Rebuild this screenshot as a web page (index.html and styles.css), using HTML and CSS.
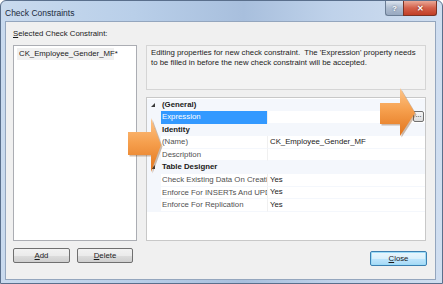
FILE: index.html
```html
<!DOCTYPE html>
<html lang="en">
<head>
    <meta charset="UTF-8">
    <title>Check Constraints</title>
    <link rel="stylesheet" href="styles.css">
</head>
<body>
    <div class="window">
        <div class="titlebar">
            <span class="title">Check Constraints</span>
            <div class="caption-buttons">
                <span class="cap-btn help">?</span>
                <span class="cap-btn close">✕</span>
            </div>
        </div>

        <div class="client">
            <!-- 左側: 制約の一覧 -->
            <div class="left-pane">
                <div class="label"><u>S</u>elected Check Constraint:</div>
                <div class="listbox">
                    <div class="list-item">CK_Employee_Gender_MF*</div>
                </div>
                <div class="button-row">
                    <button class="btn add"><u>A</u>dd</button>
                    <button class="btn delete"><u>D</u>elete</button>
                </div>
            </div>

            <!-- 右側: 説明とプロパティグリッド -->
            <div class="right-pane">
                <div class="description">
                    Editing properties for new check constraint.&nbsp; The 'Expression' property needs to be filled in before the new check constraint will be accepted.
                </div>

                <div class="prop-grid">
                    <div class="row category">
                        <span class="gutter"><i class="expander"></i></span>
                        <span class="cat-name">(General)</span>
                    </div>
                    <div class="row">
                        <span class="gutter"></span>
                        <span class="name selected">Expression</span>
                        <span class="value"><span class="ellipsis">...</span></span>
                    </div>
                    <div class="row category">
                        <span class="gutter"><i class="expander"></i></span>
                        <span class="cat-name">Identity</span>
                    </div>
                    <div class="row">
                        <span class="gutter"></span>
                        <span class="name">(Name)</span>
                        <span class="value">CK_Employee_Gender_MF</span>
                    </div>
                    <div class="row">
                        <span class="gutter"></span>
                        <span class="name">Description</span>
                        <span class="value"></span>
                    </div>
                    <div class="row category">
                        <span class="gutter"><i class="expander"></i></span>
                        <span class="cat-name">Table Designer</span>
                    </div>
                    <div class="row">
                        <span class="gutter"></span>
                        <span class="name">Check Existing Data On Creation Or Re-Enabling</span>
                        <span class="value">Yes</span>
                    </div>
                    <div class="row">
                        <span class="gutter"></span>
                        <span class="name">Enforce For INSERTs And UPDATEs</span>
                        <span class="value">Yes</span>
                    </div>
                    <div class="row">
                        <span class="gutter"></span>
                        <span class="name">Enforce For Replication</span>
                        <span class="value">Yes</span>
                    </div>
                </div>

                <div class="button-row end">
                    <button class="btn default"><u>C</u>lose</button>
                </div>
            </div>
        </div>

        <!-- 注釈用のオレンジ矢印 (重ね描き) -->
        <svg class="arrows" width="443" height="284" viewBox="0 0 443 284">
            <defs>
                <linearGradient id="orange" x1="0" y1="0" x2="0" y2="1">
                    <stop offset="0" stop-color="#fdc58a"/>
                    <stop offset="0.45" stop-color="#f6a04e"/>
                    <stop offset="1" stop-color="#e2741c"/>
                </linearGradient>
            </defs>
            <polygon points="128,132 151,132 151,118 161,145 151,172 151,155 128,155" fill="#7a4310" opacity="0.35" transform="translate(1.5,1.5)"/>
            <polygon points="128,132 151,132 151,118 161,145 151,172 151,155 128,155" fill="url(#orange)"/>
            <polygon points="380,103 400,103 400,88 415,113 400,136 400,124 380,124" fill="#7a4310" opacity="0.35" transform="translate(1.5,1.5)"/>
            <polygon points="380,103 400,103 400,88 415,113 400,136 400,124 380,124" fill="url(#orange)"/>
        </svg>
    </div>
</body>
</html>
```

FILE: styles.css
```css
body {
    margin: 0;
    font-family: "Liberation Sans", Arial, sans-serif;
    font-size: 7.8px;
    color: #1a1a1a;
    background-color: #fff;
}

.window {
    position: relative;
    width: 443px;
    height: 284px;
    box-sizing: border-box;
    border: 1px solid #5a6f8c;
    border-radius: 6px 6px 0 0;
    padding: 0 6px 3px 4px;
    background: linear-gradient(to right, #c9daee 0%, #b9cfe9 30%, #a8bfdd 55%, #bfd2ea 75%, #d0def0 100%);
    overflow: hidden;
}

/* タイトルバー */
.titlebar {
    display: flex;
    justify-content: space-between;
    align-items: flex-start;
    height: 20px;
    margin-right: -1px;
}

.title {
    font-size: 8.5px;
    color: #1b2a3c;
    line-height: 11px;
    margin-top: 7px;
}

.caption-buttons {
    display: flex;
}

.cap-btn {
    height: 15px;
    box-sizing: border-box;
    border: 1px solid #6b7d95;
    border-top: none;
    display: flex;
    align-items: center;
    justify-content: center;
    color: #fff;
    font-size: 8px;
    font-weight: bold;
}

.cap-btn.help {
    width: 18px;
    border-radius: 0 0 0 3px;
    border-right: none;
    background: linear-gradient(#dbe4ef, #aebcd0 50%, #98a9c1);
    text-shadow: 0 0 2px #4a5a70;
}

.cap-btn.close {
    width: 34px;
    border-radius: 0 0 3px 0;
    border-color: #7a3325;
    background: linear-gradient(#eaa896, #d4604a 50%, #c13e26);
    text-shadow: 0 0 2px #6a1b10;
}

/* クライアント領域 */
.client {
    display: flex;
    gap: 9px;
    height: 259px;
    box-sizing: border-box;
    border: 1px solid #94a6be;
    background-color: #f0f0f0;
    padding: 6px 9px 0 7px;
}

.left-pane {
    width: 124px;
    display: flex;
    flex-direction: column;
}

.label {
    height: 11px;
    line-height: 11px;
    margin-bottom: 6px;
}

.listbox {
    height: 196px;
    box-sizing: border-box;
    border: 1px solid #abadb3;
    background-color: #fff;
    padding: 2px 0 0 3px;
}

.list-item {
    width: 97px;
    height: 12px;
    line-height: 12px;
    padding-left: 2px;
    box-sizing: border-box;
    background-color: #f0f0f0;
    white-space: nowrap;
}

.button-row {
    display: flex;
    gap: 7px;
    margin-top: 7px;
}

.button-row.end {
    justify-content: flex-end;
    margin-top: 10px;
    margin-right: -1px;
}

.btn {
    height: 15px;
    box-sizing: border-box;
    border: 1px solid #707070;
    border-radius: 2px;
    background: linear-gradient(#f2f2f2 0%, #ebebeb 50%, #dddddd 51%, #cfcfcf 100%);
    font-family: "Liberation Sans", Arial, sans-serif;
    font-size: 7.8px;
    color: #1a1a1a;
    padding: 0;
}

.btn.add {
    width: 57px;
}

.btn.delete {
    width: 56px;
}

.btn.default {
    width: 57px;
    border-color: #3c7fb1;
    background: linear-gradient(#eaf6fd 0%, #d9f0fc 50%, #bee6fd 51%, #a7d9f5 100%);
    box-shadow: inset 0 0 0 1px #9ddcf7;
}

.right-pane {
    width: 280px;
    display: flex;
    flex-direction: column;
    padding-top: 17px;
}

.description {
    height: 45px;
    box-sizing: border-box;
    border: 1px solid #d5d5d5;
    background-color: #f3f3f3;
    padding: 2px 3px 2px 4px;
    line-height: 10px;
    color: #222;
}

/* プロパティグリッド */
.prop-grid {
    height: 144px;
    box-sizing: border-box;
    margin-top: 7px;
    border: 1px solid #c8c8c8;
    background-color: #fff;
}

.row {
    display: flex;
    height: 12.6px;
    line-height: 12px;
}

.row:first-child {
    margin-top: 0.5px;
}

.gutter {
    width: 14px;
    flex-shrink: 0;
    background-color: #f4f7fc;
    position: relative;
}

.expander {
    position: absolute;
    left: 4px;
    top: 4px;
    width: 0;
    height: 0;
    border-left: 4px solid transparent;
    border-bottom: 4px solid #3a3a3a;
}

.category {
    background-color: #f4f7fc;
}

.cat-name {
    font-weight: bold;
    padding-left: 1px;
}

.name {
    width: 106px;
    flex-shrink: 0;
    box-sizing: border-box;
    padding-left: 1px;
    color: #505050;
    white-space: nowrap;
    overflow: hidden;
    border-bottom: 1px solid #f4f7fc;
}

.name.selected {
    background-color: #3399ff;
    color: #fff;
    border-bottom-color: #3399ff;
}

.value {
    flex: 1;
    display: flex;
    align-items: center;
    box-sizing: border-box;
    padding-left: 2px;
    border-left: 1px solid #f0f0f0;
    border-bottom: 1px solid #f4f7fc;
    white-space: nowrap;
}

.ellipsis {
    margin-left: auto;
    margin-right: 1px;
    width: 11px;
    height: 11px;
    box-sizing: border-box;
    border: 1px solid #707070;
    border-radius: 2px;
    background: linear-gradient(#f6f6f6, #dcdcdc);
    font-size: 7px;
    line-height: 6px;
    text-align: center;
    color: #000;
}

.arrows {
    position: absolute;
    left: -1px;
    top: -1px;
    pointer-events: none;
}
```
